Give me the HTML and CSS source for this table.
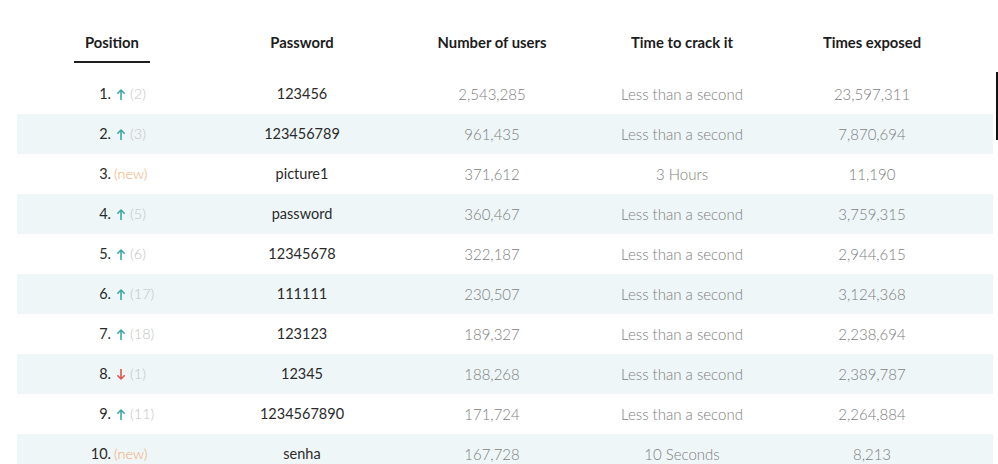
FILE: index.html
```html
<!DOCTYPE html>
<html lang="en">
<head>
<meta charset="utf-8">
<title>Top passwords</title>
<link rel="stylesheet" href="styles.css">
</head>
<body>
<div class="page">
  <div class="table">
    <div class="head">
      <div class="hcell"><span class="tab">Position</span></div>
      <div class="hcell">Password</div>
      <div class="hcell">Number of users</div>
      <div class="hcell">Time to crack it</div>
      <div class="hcell">Times exposed</div>
    </div>

    <div class="row">
      <div class="cell pos"><span class="num">1.</span><span class="chg"><svg class="arrow up" viewBox="0 0 8 11"><path d="M4 10.5V1M0.8 4.2L4 1l3.2 3.2"/></svg><span class="prev">(2)</span></span></div>
      <div class="cell pw">123456</div>
      <div class="cell light">2,543,285</div>
      <div class="cell light">Less than a second</div>
      <div class="cell light">23,597,311</div>
    </div>
    <div class="row alt">
      <div class="cell pos"><span class="num">2.</span><span class="chg"><svg class="arrow up" viewBox="0 0 8 11"><path d="M4 10.5V1M0.8 4.2L4 1l3.2 3.2"/></svg><span class="prev">(3)</span></span></div>
      <div class="cell pw">123456789</div>
      <div class="cell light">961,435</div>
      <div class="cell light">Less than a second</div>
      <div class="cell light">7,870,694</div>
    </div>
    <div class="row">
      <div class="cell pos"><span class="num">3.</span><span class="chg"><span class="new">(new)</span></span></div>
      <div class="cell pw">picture1</div>
      <div class="cell light">371,612</div>
      <div class="cell light">3 Hours</div>
      <div class="cell light">11,190</div>
    </div>
    <div class="row alt">
      <div class="cell pos"><span class="num">4.</span><span class="chg"><svg class="arrow up" viewBox="0 0 8 11"><path d="M4 10.5V1M0.8 4.2L4 1l3.2 3.2"/></svg><span class="prev">(5)</span></span></div>
      <div class="cell pw">password</div>
      <div class="cell light">360,467</div>
      <div class="cell light">Less than a second</div>
      <div class="cell light">3,759,315</div>
    </div>
    <div class="row">
      <div class="cell pos"><span class="num">5.</span><span class="chg"><svg class="arrow up" viewBox="0 0 8 11"><path d="M4 10.5V1M0.8 4.2L4 1l3.2 3.2"/></svg><span class="prev">(6)</span></span></div>
      <div class="cell pw">12345678</div>
      <div class="cell light">322,187</div>
      <div class="cell light">Less than a second</div>
      <div class="cell light">2,944,615</div>
    </div>
    <div class="row alt">
      <div class="cell pos"><span class="num">6.</span><span class="chg"><svg class="arrow up" viewBox="0 0 8 11"><path d="M4 10.5V1M0.8 4.2L4 1l3.2 3.2"/></svg><span class="prev">(17)</span></span></div>
      <div class="cell pw">111111</div>
      <div class="cell light">230,507</div>
      <div class="cell light">Less than a second</div>
      <div class="cell light">3,124,368</div>
    </div>
    <div class="row">
      <div class="cell pos"><span class="num">7.</span><span class="chg"><svg class="arrow up" viewBox="0 0 8 11"><path d="M4 10.5V1M0.8 4.2L4 1l3.2 3.2"/></svg><span class="prev">(18)</span></span></div>
      <div class="cell pw">123123</div>
      <div class="cell light">189,327</div>
      <div class="cell light">Less than a second</div>
      <div class="cell light">2,238,694</div>
    </div>
    <div class="row alt">
      <div class="cell pos"><span class="num">8.</span><span class="chg"><svg class="arrow down" viewBox="0 0 8 11"><path d="M4 0.5V10M0.8 6.8L4 10l3.2-3.2"/></svg><span class="prev">(1)</span></span></div>
      <div class="cell pw">12345</div>
      <div class="cell light">188,268</div>
      <div class="cell light">Less than a second</div>
      <div class="cell light">2,389,787</div>
    </div>
    <div class="row">
      <div class="cell pos"><span class="num">9.</span><span class="chg"><svg class="arrow up" viewBox="0 0 8 11"><path d="M4 10.5V1M0.8 4.2L4 1l3.2 3.2"/></svg><span class="prev">(11)</span></span></div>
      <div class="cell pw">1234567890</div>
      <div class="cell light">171,724</div>
      <div class="cell light">Less than a second</div>
      <div class="cell light">2,264,884</div>
    </div>
    <div class="row alt">
      <div class="cell pos"><span class="num">10.</span><span class="chg"><span class="new">(new)</span></span></div>
      <div class="cell pw">senha</div>
      <div class="cell light">167,728</div>
      <div class="cell light">10 Seconds</div>
      <div class="cell light">8,213</div>
    </div>
  </div>
  <div class="scrollthumb"></div>
</div>
</body>
</html>
```

FILE: styles.css
```css
* { box-sizing: border-box; }
html, body {
  margin: 0;
  padding: 0;
  background: #ffffff;
  overflow: hidden;
}
body {
  font-family: Lato, "Noto Sans", "Liberation Sans", sans-serif;
  font-size: 14.5px;
  color: #333333;
}
.page {
  position: relative;
  width: 998px;
  height: 464px;
  overflow: hidden;
}
.table {
  margin-left: 17px;
  width: 976px;
}
.head {
  display: grid;
  grid-template-columns: repeat(5, 190px) 1fr;
  height: 74px;
  padding-top: 33px;
}
.hcell {
  text-align: center;
  font-weight: 700;
  font-size: 14.8px;
  line-height: 18px;
  color: #1c1c1c;
}
.tab {
  display: inline-block;
  padding: 0 11px 10px;
  border-bottom: 2px solid #1f1f1f;
}
.row {
  display: grid;
  grid-template-columns: repeat(5, 190px) 1fr;
  height: 40px;
  align-items: center;
}
.row.alt {
  background: #eef6f8;
}
.cell {
  text-align: center;
  line-height: 18px;
}
.pw {
  color: #2a2a2a;
}
.light {
  color: #7e7e7e;
  font-weight: 300;
  font-size: 15px;
}
.pos {
  display: flex;
  align-items: center;
  text-align: left;
}
.num {
  width: 94px;
  text-align: right;
  color: #2a2a2a;
}
.chg {
  display: flex;
  align-items: center;
  margin-left: 3px;
}
.arrow {
  width: 8px;
  height: 11px;
  margin-left: 3px;
  margin-right: 5px;
  fill: none;
  stroke-width: 1.6;
  stroke-linecap: round;
  stroke-linejoin: round;
}
.arrow.up { stroke: #3ea9a2; }
.arrow.down { stroke: #e2534d; }
.prev {
  color: #c4c4c4;
  font-weight: 300;
}
.new {
  color: #f4a76c;
  font-weight: 300;
}
.scrollthumb {
  position: absolute;
  left: 996px;
  top: 72px;
  width: 2px;
  height: 68px;
  background: #111111;
}
```
